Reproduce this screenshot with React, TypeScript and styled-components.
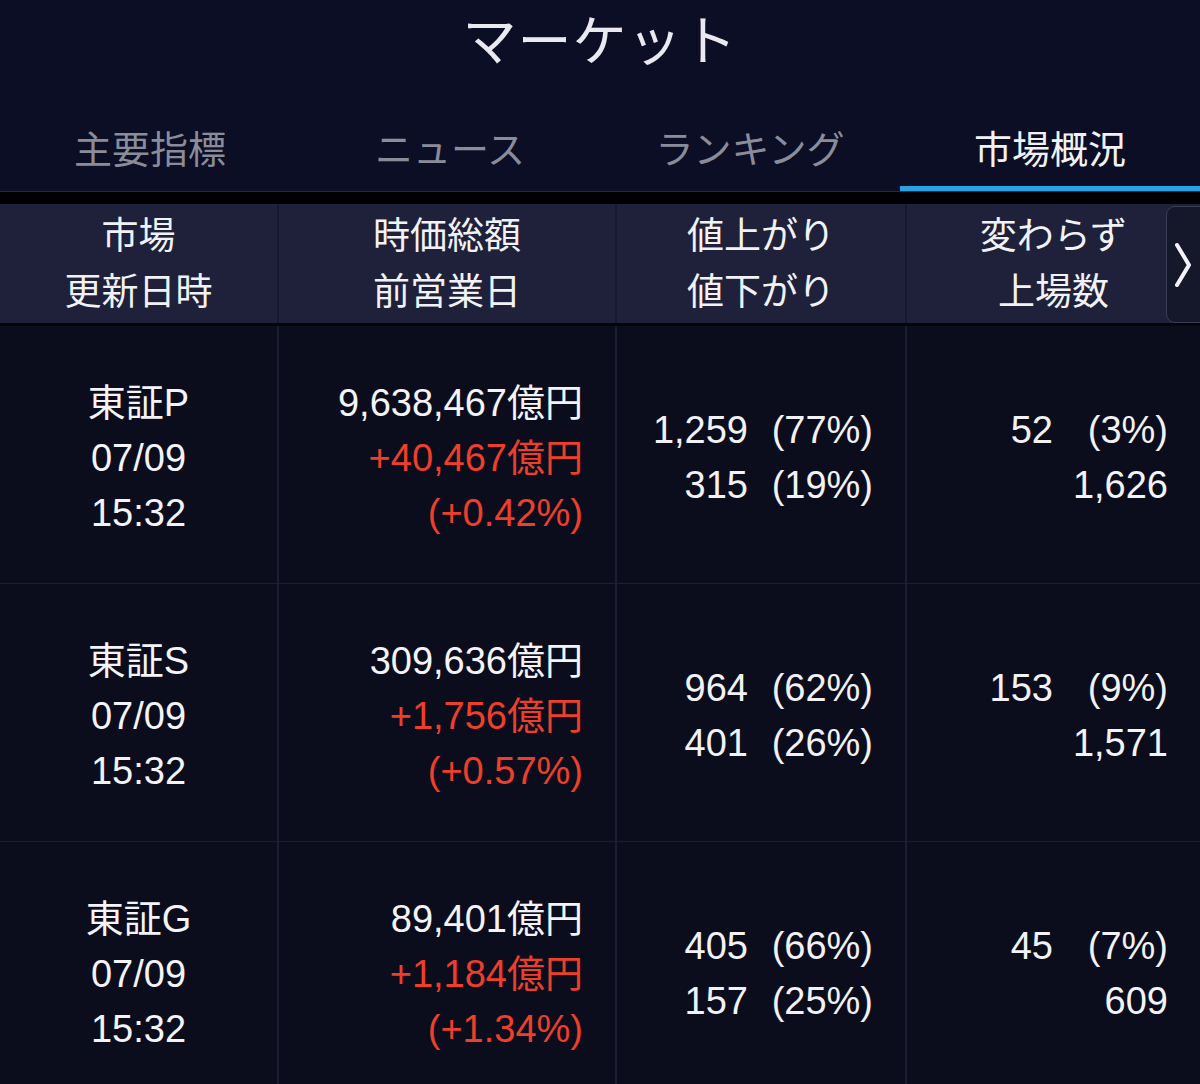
import React from 'react';
import styled, { createGlobalStyle } from 'styled-components';

const GlobalStyle = createGlobalStyle`
  html, body {
    margin: 0;
    padding: 0;
    background-color: #0c0e26;
    overflow: hidden;
  }
  body {
    font-family: 'Liberation Sans', 'Noto Sans CJK JP', sans-serif;
  }
`;

interface Market {
  name: string;
  date: string;
  time: string;
  cap: string;
  change: string;
  rate: string;
  up: [string, string];
  down: [string, string];
  flat: [string, string];
  listed: string;
}

const markets: Market[] = [
  {
    name: '東証P',
    date: '07/09',
    time: '15:32',
    cap: '9,638,467億円',
    change: '+40,467億円',
    rate: '(+0.42%)',
    up: ['1,259', '(77%)'],
    down: ['315', '(19%)'],
    flat: ['52', '(3%)'],
    listed: '1,626',
  },
  {
    name: '東証S',
    date: '07/09',
    time: '15:32',
    cap: '309,636億円',
    change: '+1,756億円',
    rate: '(+0.57%)',
    up: ['964', '(62%)'],
    down: ['401', '(26%)'],
    flat: ['153', '(9%)'],
    listed: '1,571',
  },
  {
    name: '東証G',
    date: '07/09',
    time: '15:32',
    cap: '89,401億円',
    change: '+1,184億円',
    rate: '(+1.34%)',
    up: ['405', '(66%)'],
    down: ['157', '(25%)'],
    flat: ['45', '(7%)'],
    listed: '609',
  },
];

const tabs = ['主要指標', 'ニュース', 'ランキング', '市場概況'];

const App = () => {
  return (
    <Page>
      <GlobalStyle />
      <TitleBar>マーケット</TitleBar>
      <TabBar>
        {tabs.map((t, i) => (
          <Tab key={t} active={i === 3}>
            {t}
          </Tab>
        ))}
      </TabBar>
      <Gap />
      <HeaderRow>
        <HeadCell>
          <span>市場</span>
          <span>更新日時</span>
        </HeadCell>
        <HeadCell>
          <span>時価総額</span>
          <span>前営業日</span>
        </HeadCell>
        <HeadCell>
          <span>値上がり</span>
          <span>値下がり</span>
        </HeadCell>
        <HeadCell>
          <span>変わらず</span>
          <span>上場数</span>
        </HeadCell>
        <NextButton>
          <svg width="18" height="46" viewBox="0 0 18 46">
            <path
              d="M3 3 L15 23 L3 43"
              fill="none"
              stroke="#f4f4f8"
              strokeWidth="4"
              strokeLinecap="round"
              strokeLinejoin="round"
            />
          </svg>
        </NextButton>
      </HeaderRow>
      {markets.map((m) => (
        <DataRow key={m.name}>
          <Cell align="center">
            <Line>{m.name}</Line>
            <Line>{m.date}</Line>
            <Line>{m.time}</Line>
          </Cell>
          <Cell align="right">
            <Line>{m.cap}</Line>
            <Line red>{m.change}</Line>
            <Line red>{m.rate}</Line>
          </Cell>
          <Cell align="right">
            <Pair pctWidth={125}>
              <span>{m.up[0]}</span>
              <span>{m.up[1]}</span>
            </Pair>
            <Pair pctWidth={125}>
              <span>{m.down[0]}</span>
              <span>{m.down[1]}</span>
            </Pair>
          </Cell>
          <Cell align="right">
            <Pair pctWidth={115}>
              <span>{m.flat[0]}</span>
              <span>{m.flat[1]}</span>
            </Pair>
            <Line>{m.listed}</Line>
          </Cell>
        </DataRow>
      ))}
    </Page>
  );
};

const Page = styled.div`
  width: 1200px;
  height: 1084px;
  overflow: hidden;
  background-color: #0c0e26;
  color: #f2f2f6;
`;

const TitleBar = styled.div`
  height: 74px;
  padding-bottom: 8px;
  display: flex;
  align-items: center;
  justify-content: center;
  font-size: 54px;
  color: #e9e9ef;
  letter-spacing: 1px;
`;

const TabBar = styled.div`
  display: grid;
  grid-template-columns: repeat(4, 1fr);
  border-bottom: 1px solid #262a3e;
`;

const Tab = styled.div<{ active?: boolean }>`
  height: 80px;
  padding-top: 24px;
  display: flex;
  align-items: center;
  justify-content: center;
  font-size: 38px;
  color: ${(p) => (p.active ? '#f2f2f6' : '#8b8c99')};
  border-bottom: 5px solid ${(p) => (p.active ? '#28a3e6' : 'transparent')};
`;

const Gap = styled.div`
  height: 12px;
  background-color: #010104;
`;

const HeaderRow = styled.div`
  position: relative;
  display: grid;
  grid-template-columns: 277px 338px 290px 1fr;
  height: 119px;
  background-color: #1e2139;
  border-bottom: 3px solid #05060d;
`;

const HeadCell = styled.div`
  display: flex;
  flex-direction: column;
  align-items: center;
  justify-content: center;
  padding-top: 3px;
  font-size: 37px;
  line-height: 56px;
  color: #f2f2f6;
  & + & {
    border-left: 2px solid #171a2f;
  }
`;

const NextButton = styled.div`
  position: absolute;
  top: 2px;
  right: -10px;
  width: 44px;
  height: 117px;
  box-sizing: border-box;
  padding-right: 10px;
  display: flex;
  align-items: center;
  justify-content: center;
  background-color: #15172b;
  border: 1px solid #3a3d52;
  border-radius: 9px;
`;

const DataRow = styled.div`
  display: grid;
  grid-template-columns: 277px 338px 290px 1fr;
  height: 257px;
  background-color: #0b0d1d;
  border-bottom: 1px solid #1c1f35;
`;

const Cell = styled.div<{ align: 'center' | 'right' }>`
  display: flex;
  flex-direction: column;
  justify-content: center;
  align-items: ${(p) => (p.align === 'center' ? 'center' : 'flex-end')};
  padding-right: ${(p) => (p.align === 'center' ? '0' : '32px')};
  padding-top: 7px;
  font-size: 38px;
  line-height: 55px;
  & + & {
    border-left: 2px solid #1b1e33;
  }
`;

const Line = styled.div<{ red?: boolean }>`
  color: ${(p) => (p.red ? '#ee3f2b' : '#f4f4f8')};
  white-space: nowrap;
`;

const Pair = styled.div<{ pctWidth: number }>`
  display: grid;
  grid-template-columns: auto ${(p) => p.pctWidth}px;
  white-space: nowrap;
  & > span {
    text-align: right;
  }
`;

export default App;
